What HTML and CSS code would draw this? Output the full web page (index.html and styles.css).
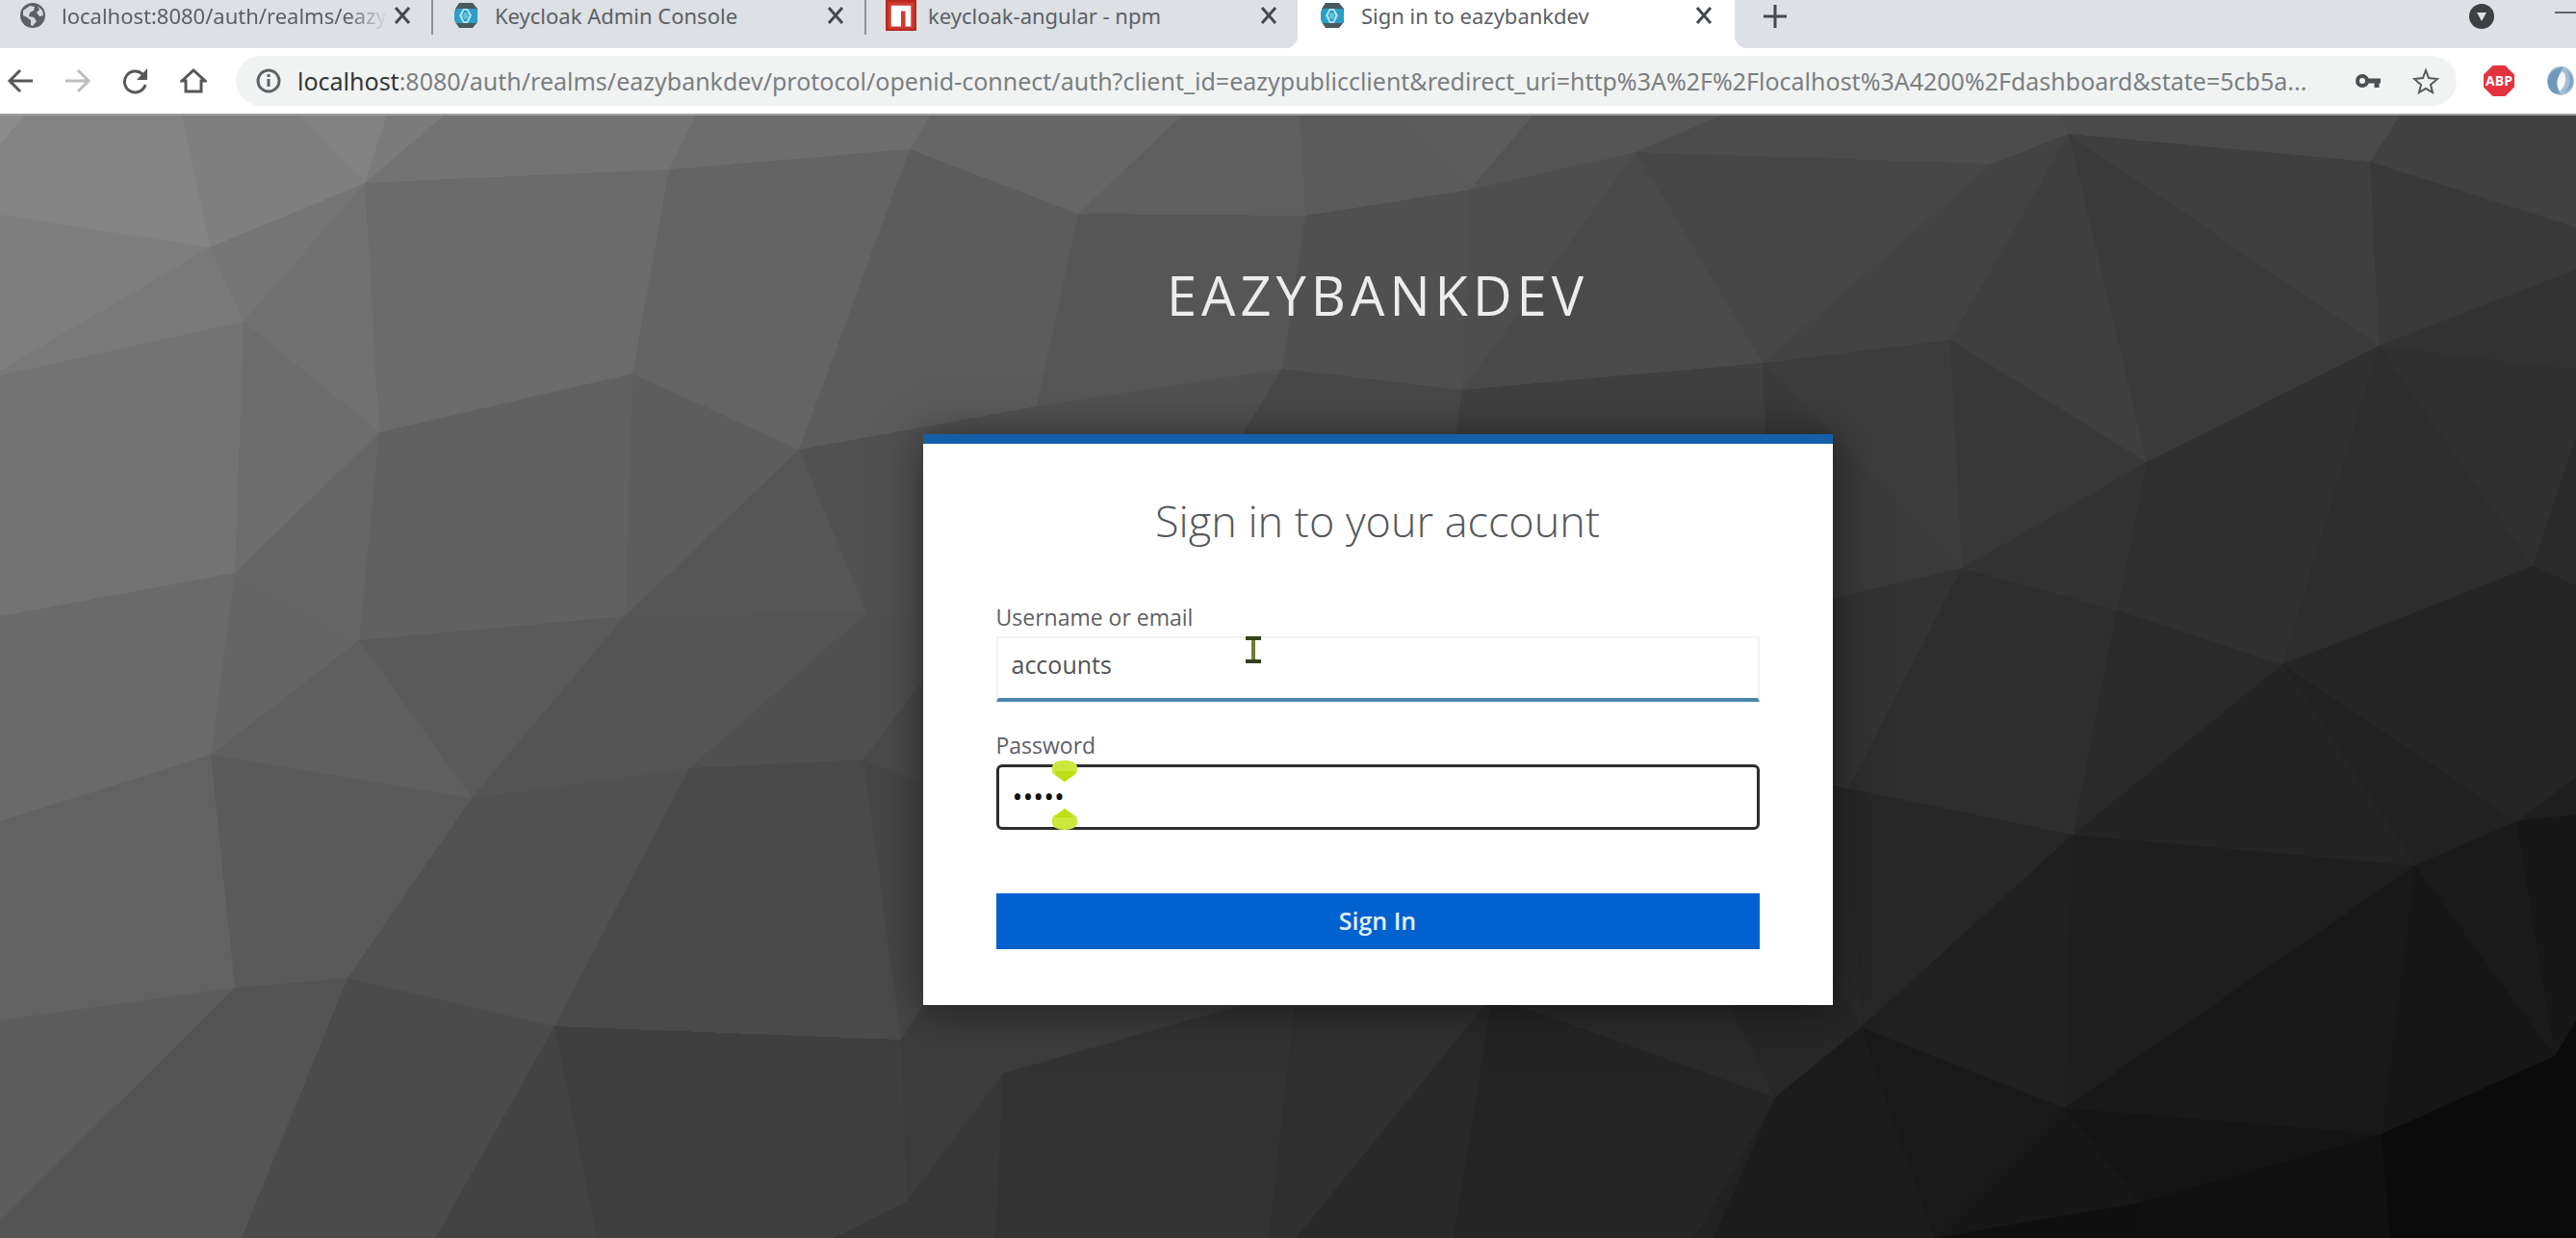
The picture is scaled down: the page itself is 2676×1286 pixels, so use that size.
FILE: index.html
```html
<!DOCTYPE html>
<html lang="en">
<head>
<meta charset="utf-8">
<title>Sign in to eazybankdev</title>
<link rel="stylesheet" href="styles.css">
</head>
<body>
<svg width="0" height="0" class="defs" aria-hidden="true">
  <symbol id="keycloak" viewBox="0 0 28 28">
    <path d="M7 1h14l5 6v14l-5 6H7l-4-6V7z" fill="#4a5a60"/>
    <path d="M4 7h21l1 3v9l-1 3H4l-2-3v-9z" fill="#2c9fc8"/>
    <path d="M11 7h5l4 7-4 8h-5l-4-8z" fill="#a8e2f4"/>
    <path d="M12 9h3l2 5-2 6h-3l-2-6z" fill="#2a8cb5"/>
    <path d="M12 11h3l1 3-1 4h-3l-1-4z" fill="#5cc6e6"/>
  </symbol>
  <symbol id="close" viewBox="0 0 24 24"><path d="M5 4l14 16M19 4L5 20" stroke="#45494d" stroke-width="3" fill="none"/></symbol>
</svg>

<header class="browser">
  <div class="strip">
    <div class="tab">
      <svg class="favicon" viewBox="0 0 28 28"><circle cx="14" cy="14" r="13" fill="#5b6064"/><path d="M4 9l7-5 5 1-1 4-4 2-1 4 5 1 3 4-4 5-2-1v-5l-4-3-4-2zM19 4l5 5 1 5-4 1-3-4 3-3z" fill="#d5d9dd"/></svg>
      <span class="tab-name faded">localhost:8080/auth/realms/eazy</span>
      <button class="icon-button" aria-label="Close tab"><svg class="close"><use href="#close"/></svg></button>
    </div>
    <div class="tab divided">
      <svg class="favicon"><use href="#keycloak"/></svg>
      <span class="tab-name">Keycloak Admin Console</span>
      <button class="icon-button" aria-label="Close tab"><svg class="close"><use href="#close"/></svg></button>
    </div>
    <div class="tab divided">
      <svg class="favicon large" viewBox="0 0 28 28"><path d="M0 0h28v28H0z" fill="#b8281f"/><path d="M2 2h24v24H2z" fill="#cc3a30"/><path d="M5 5h18v19h-5V10h-4v14H5z" fill="#fff"/></svg>
      <span class="tab-name">keycloak-angular - npm</span>
      <button class="icon-button" aria-label="Close tab"><svg class="close"><use href="#close"/></svg></button>
    </div>
    <div class="tab active">
      <svg class="favicon"><use href="#keycloak"/></svg>
      <span class="tab-name">Sign in to eazybankdev</span>
      <button class="icon-button" aria-label="Close tab"><svg class="close"><use href="#close"/></svg></button>
    </div>
    <button class="icon-button new-tab" aria-label="New tab"><svg class="close" viewBox="0 0 24 24"><path d="M12 0v24M0 12h24" stroke="#45494d" stroke-width="3"/></svg></button>
    <div class="window-tools">
      <button class="icon-button" aria-label="Search tabs"><svg class="tool" viewBox="0 0 28 28"><circle cx="14" cy="14" r="13" fill="#3c4043"/><path d="M9 10h10l-5 9z" fill="#dde0e4"/></svg></button>
      <button class="icon-button" aria-label="Minimize"><svg class="close" viewBox="0 0 24 24"><path d="M2 8h22" stroke="#5f6368" stroke-width="2"/></svg></button>
    </div>
  </div>

  <div class="toolbar">
    <button class="icon-button" aria-label="Back"><svg class="tool" viewBox="0 0 28 28"><path d="M27 14H3M14 3L3 14l11 11" fill="none" stroke="#55585b" stroke-width="3"/></svg></button>
    <button class="icon-button" aria-label="Forward"><svg class="tool" viewBox="0 0 28 28"><path d="M1 14h24M14 3l11 11-11 11" fill="none" stroke="#bcbec0" stroke-width="3"/></svg></button>
    <button class="icon-button" aria-label="Reload"><svg class="tool" viewBox="0 0 28 28"><path d="M24 18a11 11 0 1 1-3-11l3 3" fill="none" stroke="#55585b" stroke-width="3"/><path d="M26 1v12H15z" fill="#55585b"/></svg></button>
    <button class="icon-button" aria-label="Home"><svg class="tool" viewBox="0 0 28 28"><path d="M2 14L14 3l12 11h-4v11H6V14z" fill="none" stroke="#55585b" stroke-width="3"/></svg></button>
    <div class="address">
      <svg class="tool" viewBox="0 0 28 28"><circle cx="14" cy="14" r="11" fill="none" stroke="#5f6368" stroke-width="3"/><path d="M14 12v8M14 7v3" stroke="#5f6368" stroke-width="3"/></svg>
      <span class="url"><b>localhost</b>:8080/auth/realms/eazybankdev/protocol/openid-connect/auth?client_id=eazypublicclient&amp;redirect_uri=http%3A%2F%2Flocalhost%3A4200%2Fdashboard&amp;state=5cb5a...</span>
      <button class="icon-button" aria-label="Saved password"><svg class="tool" viewBox="0 0 28 28"><circle cx="8" cy="14" r="5" fill="none" stroke="#4c5053" stroke-width="4"/><path d="M12 14h15M23 14v7" stroke="#4c5053" stroke-width="5"/></svg></button>
      <button class="icon-button" aria-label="Bookmark"><svg class="tool" viewBox="0 0 28 28"><path d="M14 3l3 8 9 1-7 6 2 8-7-4-7 4 2-8-7-6 9-1z" fill="none" stroke="#55585b" stroke-width="2"/></svg></button>
    </div>
    <button class="icon-button abp" aria-label="Adblock Plus">ABP</button>
    <button class="icon-button" aria-label="Extension"><svg class="extension" viewBox="0 0 32 32"><ellipse cx="16" cy="16" rx="14" ry="15" fill="#a3bed6"/><path d="M4 23C0 12 7 2 19 2 13 8 12 17 15 29 10 30 6 28 4 23z" fill="#6f98bc"/><path d="M18 6c6 5 3 16-3 21-4-6-4-14 3-21z" fill="#f4f8fb"/><path d="M20 28c6-6 8-15 2-23 8 4 11 18-2 23z" fill="#7fa3c2"/></svg></button>
  </div>
</header>

<main class="page">
  <svg class="facets" viewBox="0 120 2676 1166" preserveAspectRatio="none" shape-rendering="crispEdges" aria-hidden="true">
    <path d="M0 119H189L218 257 0 223z" fill="#848484"/>
    <path d="M0 119H26L0 150z" fill="#8c8c8c"/>
    <path d="M189 119H310L379 190 218 257z" fill="#7f7f7f"/>
    <path d="M310 119H402L379 190z" fill="#828282"/>
    <path d="M402 119H462L379 190z" fill="#7b7b7b"/>
    <path d="M462 119H723L695 176 379 190z" fill="#737373"/>
    <path d="M723 119H967L945 155 695 176z" fill="#6d6d6d"/>
    <path d="M0 223L218 257 0 385z" fill="#7e7e7e"/>
    <path d="M0 385L218 257 253 334 0 390z" fill="#797979"/>
    <path d="M218 257L379 190 253 334z" fill="#757575"/>
    <path d="M379 190L394 449 253 334z" fill="#717171"/>
    <path d="M0 390L253 334 244 595 0 640z" fill="#737373"/>
    <path d="M253 334L394 449 244 595z" fill="#6d6d6d"/>
    <path d="M379 190L695 176 657 388 394 449z" fill="#6b6b6b"/>
    <path d="M695 176L945 155 830 467 657 388z" fill="#646464"/>
    <path d="M394 449L657 388 649 640 373 665z" fill="#616161"/>
    <path d="M394 449L373 665 244 595z" fill="#666"/>
    <path d="M657 388L830 467 649 640z" fill="#5d5d5d"/>
    <path d="M830 467L900 637 649 640z" fill="#565656"/>
    <path d="M0 640L244 595 219 784 0 853z" fill="#6a6a6a"/>
    <path d="M244 595L373 665 219 784z" fill="#656565"/>
    <path d="M373 665L490 829 219 784z" fill="#5f5f5f"/>
    <path d="M373 665L649 640 490 829z" fill="#5a5a5a"/>
    <path d="M649 640L900 637 716 798 490 829z" fill="#545454"/>
    <path d="M900 637L1000 650 897 789 716 798z" fill="#505050"/>
    <path d="M0 853L219 784 244 1026 0 1060z" fill="#626262"/>
    <path d="M219 784L490 829 361 1016 244 1026z" fill="#5a5a5a"/>
    <path d="M490 829L716 798 576 1066 361 1016z" fill="#515151"/>
    <path d="M716 798L897 789 936 1080 576 1066z" fill="#4a4a4a"/>
    <path d="M0 1060L244 1026 0 1268z" fill="#5c5c5c"/>
    <path d="M0 1268L244 1026 361 1016 251 1286H0z" fill="#545454"/>
    <path d="M361 1016L576 1066 452 1286H251z" fill="#4b4b4b"/>
    <path d="M576 1066L620 1286H452z" fill="#434343"/>
    <path d="M576 1066L936 1080 942 1248 866 1286H620z" fill="#3f3f3f"/>
    <path d="M967 119H1229L1120 222 945 155z" fill="#666"/>
    <path d="M1229 119H1350L1356 224 1120 222z" fill="#5f5f5f"/>
    <path d="M1350 119H1453L1527 197 1356 224z" fill="#5b5b5b"/>
    <path d="M1453 119H1593L1527 197z" fill="#5c5c5c"/>
    <path d="M1593 119H1790L1699 158 1527 197z" fill="#545454"/>
    <path d="M945 155L1120 222 1077 422 830 467z" fill="#5c5c5c"/>
    <path d="M1120 222L1356 224 1332 383 1077 422z" fill="#565656"/>
    <path d="M1356 224L1527 197 1519 405 1332 383z" fill="#505050"/>
    <path d="M1527 197L1699 158 1519 405z" fill="#4e4e4e"/>
    <path d="M1699 158L1831 377 1519 405z" fill="#4a4a4a"/>
    <path d="M830 467L1077 422 1332 383 1200 600 1000 650 900 637z" fill="#515151"/>
    <path d="M1332 383L1519 405 1490 600H1200z" fill="#484848"/>
    <path d="M1519 405L1831 377 1850 600H1490z" fill="#404040"/>
    <path d="M1790 119H2149V139L2069 170 1699 158z" fill="#4c4c4c"/>
    <path d="M1699 158L2069 170 1831 377z" fill="#464646"/>
    <path d="M2069 170L2149 139 2026 353 1831 377z" fill="#434343"/>
    <path d="M2149 139L2230 480 2026 353z" fill="#3f3f3f"/>
    <path d="M2149 139L2471 359 2230 480z" fill="#3a3a3a"/>
    <path d="M2149 139L2462 168 2471 359z" fill="#3f3f3f"/>
    <path d="M2140 119H2494L2462 168 2149 139z" fill="#494949"/>
    <path d="M2494 119H2676V236L2462 168z" fill="#414141"/>
    <path d="M2462 168L2676 236V280L2471 359z" fill="#393939"/>
    <path d="M2471 359L2676 280V384z" fill="#333"/>
    <path d="M2471 359L2676 384V454L2631 588z" fill="#303030"/>
    <path d="M2676 454V608L2631 588z" fill="#2a2a2a"/>
    <path d="M1831 377L2026 353 2038 590z" fill="#3c3c3c"/>
    <path d="M1831 377L2038 590 1900 627H1840z" fill="#3a3a3a"/>
    <path d="M2026 353L2230 480 2038 590z" fill="#383838"/>
    <path d="M2230 480L2199 634 2038 590z" fill="#333"/>
    <path d="M2230 480L2371 690 2199 634z" fill="#303030"/>
    <path d="M2230 480L2471 359 2371 690z" fill="#303030"/>
    <path d="M2471 359L2631 588 2371 690z" fill="#2d2d2d"/>
    <path d="M1880 627L2038 590 1920 819 1880 810z" fill="#333"/>
    <path d="M2038 590L2199 634 2153 867 1920 819z" fill="#2e2e2e"/>
    <path d="M2199 634L2371 690 2153 867z" fill="#2a2a2a"/>
    <path d="M2371 690L2509 899 2153 867z" fill="#242424"/>
    <path d="M2371 690L2614 853 2509 899z" fill="#212121"/>
    <path d="M2371 690L2631 588 2676 608V807L2614 853z" fill="#252525"/>
    <path d="M2676 807V846L2614 853z" fill="#1e1e1e"/>
    <path d="M1880 810L1920 819 1933 1067 1880 1040z" fill="#292929"/>
    <path d="M1920 819L2153 867 1933 1067z" fill="#272727"/>
    <path d="M2153 867L2144 1151 1933 1067z" fill="#202020"/>
    <path d="M2153 867L2509 899 2144 1151z" fill="#1e1e1e"/>
    <path d="M2509 899L2474 1178 2144 1151z" fill="#181818"/>
    <path d="M2509 899L2654 1097 2474 1178z" fill="#161616"/>
    <path d="M2509 899L2614 853 2654 1097z" fill="#1a1a1a"/>
    <path d="M2614 853L2676 846V1060L2654 1097z" fill="#171717"/>
    <path d="M2654 1097L2676 1060V1286H2483L2474 1178z" fill="#0b0b0b"/>
    <path d="M2474 1178L2483 1286H2223V1249z" fill="#101010"/>
    <path d="M2144 1151L2474 1178 2223 1249z" fill="#141414"/>
    <path d="M2144 1151L2223 1249 2009 1286z" fill="#171717"/>
    <path d="M2223 1249V1286H2009z" fill="#0f0f0f"/>
    <path d="M1933 1067L2144 1151 2009 1286z" fill="#191919"/>
    <path d="M1933 1067L2009 1286H1780L1844 1140z" fill="#1c1c1c"/>
    <path d="M1780 1010L1903 1010 1933 1067 1844 1140z" fill="#272727"/>
    <path d="M1560 1010H1780L1844 1140 1550 1035z" fill="#2b2b2b"/>
    <path d="M1550 1035L1844 1140 1760 1286H1510z" fill="#252525"/>
    <path d="M1844 1140L1780 1286H1760z" fill="#212121"/>
    <path d="M1550 1035L1510 1286H1346z" fill="#292929"/>
    <path d="M1347 1010H1560L1550 1035 1346 1286H1318z" fill="#303030"/>
    <path d="M1042 1115L1375 1020H1347L1318 1286H1034z" fill="#333"/>
    <path d="M897 789L1000 810V1010L936 1080z" fill="#464646"/>
    <path d="M897 789L1000 650V830z" fill="#4a4a4a"/>
    <path d="M936 1080L980 1010H1400L1042 1115 942 1248z" fill="#3c3c3c"/>
    <path d="M942 1248L1042 1115 1034 1286H866z" fill="#373737"/>
  </svg>

  <div class="login">
    <h1 class="realm">EAZYBANKDEV</h1>
    <form class="card">
      <h2 class="card-title">Sign in to your account</h2>
      <div class="field">
        <label for="username">Username or email</label>
        <input id="username" type="text" value="accounts">
        <svg class="pointer" viewBox="0 0 18 28" aria-hidden="true"><path d="M1 2h16M1 26h16M9 2v24" stroke="#35401c" stroke-width="4"/><path d="M9 4v20" stroke="#71802f" stroke-width="4"/></svg>
      </div>
      <div class="field">
        <label for="password">Password</label>
        <input id="password" class="focused" type="password" value="abcde">
        <svg class="marker" viewBox="0 0 28 72" aria-hidden="true"><path d="M2 14C-2 4 4 0 14 0s16 4 12 14l-12 8zM2 58C-2 68 4 72 14 72s16-4 12-14l-12-8z" fill="#cbe83c"/><path d="M4 11h20l-2 5-8 6-8-6zM14 50l10 9H4z" fill="#bede14"/></svg>
      </div>
      <button class="submit" type="submit">Sign In</button>
    </form>
  </div>
</main>
</body>
</html>
```
FILE: styles.css
```css
* { box-sizing: border-box; }

body {
  margin: 0;
  min-height: 100vh;
  display: flex;
  flex-direction: column;
  overflow: hidden;
  font-family: "Open Sans", "Noto Sans", sans-serif;
}

.defs { position: absolute; }
svg { display: block; flex: none; }

.icon-button {
  display: flex;
  flex: none;
  align-items: center;
  justify-content: center;
  padding: 0;
  border: 0;
  background: none;
}

.browser { font-family: "Noto Sans", sans-serif; }

/* Tab strip */
.strip {
  display: flex;
  height: 50px;
  margin-left: -2px;
  background: #dde0e4;
}

.tab {
  display: flex;
  flex: 0 1 450px;
  align-items: center;
  gap: 16px;
  min-width: 0;
  padding: 0 18px 18px 22px;
  color: #5c6064;
}

.divided {
  background: linear-gradient(#8d9195, #8d9195) 0 0 / 2px 36px no-repeat;
}

.tab.active {
  position: relative;
  flex-basis: 454px;
  padding-right: 20px;
  background: #fff;
}

.tab.active::before,
.tab.active::after {
  content: "";
  position: absolute;
  bottom: 0;
  width: 14px;
  height: 14px;
}

.tab.active::before {
  right: 100%;
  background: radial-gradient(circle at 0 0, transparent 14px, #fff 15px);
}

.tab.active::after {
  left: 100%;
  background: radial-gradient(circle at 100% 0, transparent 14px, #fff 15px);
}

.favicon { width: 28px; height: 28px; }
.favicon.large { width: 32px; height: 32px; margin-right: -4px; }
.close { width: 24px; height: 24px; }
.tool { width: 28px; height: 28px; }
.extension { width: 32px; height: 32px; }

.tab-name {
  flex: 1;
  white-space: nowrap;
  font-size: 22px;
  line-height: 32px;
}

.tab-name.faded {
  margin-right: -12px;
  mask-image: linear-gradient(to left, transparent, #000 40px);
}

.new-tab { margin: 0 0 16px 30px; }

.window-tools {
  display: flex;
  gap: 60px;
  margin-left: auto;
  padding-bottom: 16px;
}

/* Toolbar */
.toolbar {
  display: flex;
  align-items: center;
  gap: 32px;
  height: 70px;
  padding: 0 0 0 7px;
  background: #fff;
  border-bottom: 2px solid #a0a0a0;
}

.address {
  display: flex;
  flex: 1;
  align-items: center;
  gap: 32px;
  min-width: 0;
  height: 52px;
  margin: 0 -4px 0 -2px;
  padding: 0 18px 0 20px;
  border-radius: 26px;
  background: #f1f3f3;
}

.url {
  flex: 1;
  margin-left: -16px;
  white-space: nowrap;
  font-size: 25px;
  line-height: 40px;
  color: #7b7f82;
}

.url b { font-weight: 400; color: #333639; }

.abp {
  width: 32px;
  height: 32px;
  background: #e2343f;
  clip-path: polygon(30% 0, 70% 0, 100% 30%, 100% 70%, 70% 100%, 30% 100%, 0 70%, 0 30%);
  font: 700 14px/32px "Open Sans", sans-serif;
  color: #fff;
}

/* Login page */
.page {
  position: relative;
  flex: 1;
  background: #3a3a3a;
}

.facets {
  position: absolute;
  inset: 0;
  width: 100%;
  height: 100%;
}

.login {
  position: relative;
  display: flex;
  flex-direction: column;
  align-items: center;
  padding: 146px 0 100px 186px;
}

.realm {
  margin: 0 0 105px;
  font-size: 56px;
  font-weight: 400;
  line-height: 80px;
  letter-spacing: 5px;
  color: #ececec;
}

.card {
  display: flex;
  flex-direction: column;
  width: 945px;
  max-width: 100%;
  padding: 50px 76px 58px;
  border-top: 10px solid #155fa8;
  background: #fff;
  box-shadow: 0 4px 44px rgba(0, 0, 0, 0.5);
}

.card-title {
  margin: 0 0 54px;
  font-size: 45px;
  font-weight: 300;
  line-height: 60px;
  text-align: center;
  color: #55585b;
}

.field {
  position: relative;
  display: flex;
  flex-direction: column;
  margin-bottom: 29px;
}

.field label {
  margin-bottom: 4px;
  font-size: 23px;
  line-height: 32px;
  color: #5d6063;
}

.field input {
  width: 100%;
  height: 68px;
  padding: 0 14px 8px;
  border: 2px solid #f2f2f2;
  border-bottom: 4px solid #4a86ae;
  background: #fff;
  font: 25px/36px "Open Sans", sans-serif;
  color: #505356;
  outline: none;
}

.field input.focused {
  padding: 0 14px 4px;
  border: 3px solid #2e2c2e;
  border-radius: 6px;
  font-size: 29px;
  color: #111;
}

.pointer {
  position: absolute;
  top: 36px;
  left: 258px;
  width: 18px;
  height: 28px;
}

.marker {
  position: absolute;
  bottom: 0;
  left: 57px;
  width: 28px;
  height: 72px;
}

.submit {
  height: 58px;
  margin-top: 37px;
  padding: 0 16px 2px;
  border: 0;
  background: #0061cf;
  font: 600 25px/36px "Open Sans", sans-serif;
  color: #e4efff;
}
```
